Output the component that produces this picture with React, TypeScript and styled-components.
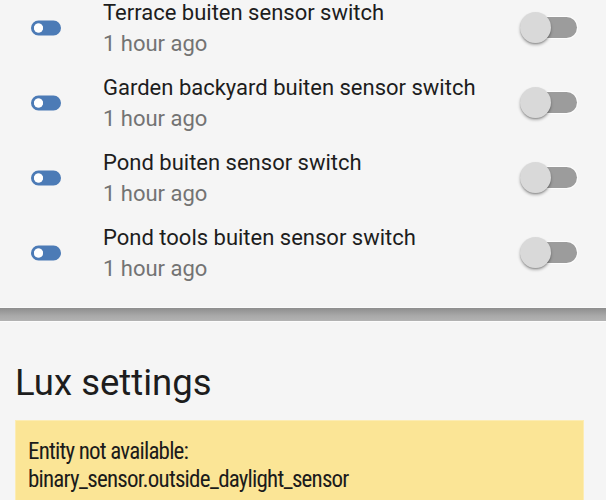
import React from 'react'
import styled, { createGlobalStyle } from 'styled-components'

const GlobalStyle = createGlobalStyle`
  html, body {
    margin: 0;
    padding: 0;
    background: #f5f5f5;
    font-family: Roboto, "Noto Sans", "Liberation Sans", sans-serif;
    -webkit-font-smoothing: antialiased;
  }
`

const Page = styled.div`
  width: 606px;
  height: 500px;
  overflow: hidden;
`

// the list is scrolled a little, so its first row starts above the window
const Scroller = styled.div`
  margin-top: -10px;
`

const Card = styled.section`
  background: #f5f5f5;
`

const EntityList = styled(Card)`
  padding-bottom: 17px;
  border-bottom: 1px solid #fafafa;
`

const Row = styled.div`
  display: flex;
  align-items: center;
  height: 75px;
  padding: 0 29px 0 28px;
`

const IconBox = styled.div`
  flex: 0 0 36px;
  width: 36px;
  height: 36px;
  display: flex;
  align-items: center;
  justify-content: center;
  margin-right: 39px;
`

const Info = styled.div`
  flex: 1 1 0;
  display: flex;
  flex-direction: column;
`

const Name = styled.div`
  font-size: 22px;
  line-height: 31px;
  color: #1d1d1d;
`

const Secondary = styled.div`
  font-size: 22px;
  line-height: 31px;
  color: #737373;
`

const Switch = styled.div`
  position: relative;
  flex: 0 0 54px;
  width: 54px;
  height: 21px;
  border-radius: 11px;
  background: #9c9c9c;
  box-shadow: 0 0 0 1px rgba(255, 255, 255, 0.8);
`

const Thumb = styled.div`
  position: absolute;
  left: -3px;
  top: -5px;
  width: 31px;
  height: 31px;
  border-radius: 50%;
  background: #d9d9d9;
  box-shadow: 0 2px 3px rgba(0, 0, 0, 0.3), 0 1px 1px rgba(0, 0, 0, 0.15);
`

const Divider = styled.div`
  height: 13px;
  background: linear-gradient(#8e8e8e, #a9a9a9 60%, #b3b3b3);
  border-bottom: 1px solid #fcfcfc;
`

const LuxCard = styled(Card)`
  padding: 37px 22px 0 15px;
`

const Heading = styled.h1`
  margin: 0 0 13px 0;
  font-size: 36.5px;
  font-weight: 400;
  line-height: 48px;
  color: #1d1d1d;
`

const Warning = styled.div`
  background: #fbe596;
  border: 1px solid #fcecb4;
  padding: 17px 12px 20px;
  font-family: "Roboto Condensed", Roboto, sans-serif;
  font-stretch: condensed;
  font-size: 23px;
  letter-spacing: -0.8px;
  line-height: 28px;
  color: #1b1b1b;
`

function ToggleIcon() {
  return (
    <svg width="36" height="36" viewBox="0 0 24 24">
      <path
        fill="#4c7bb6"
        d="M17,7H7A5,5 0 0,0 2,12A5,5 0 0,0 7,17H17A5,5 0 0,0 22,12A5,5 0 0,0 17,7M7,15A3,3 0 0,1 4,12A3,3 0 0,1 7,9A3,3 0 0,1 10,12A3,3 0 0,1 7,15Z"
      />
      <circle cx="7" cy="12" r="3" fill="#ffffff" />
    </svg>
  )
}

const entities = [
  'Terrace buiten sensor switch',
  'Garden backyard buiten sensor switch',
  'Pond buiten sensor switch',
  'Pond tools buiten sensor switch',
]

export default function App() {
  return (
    <Page>
      <GlobalStyle />
      <Scroller>
        <EntityList>
          {entities.map((name) => (
            <Row key={name}>
              <IconBox>
                <ToggleIcon />
              </IconBox>
              <Info>
                <Name>{name}</Name>
                <Secondary>1 hour ago</Secondary>
              </Info>
              <Switch>
                <Thumb />
              </Switch>
            </Row>
          ))}
        </EntityList>
        <Divider />
        <LuxCard>
          <Heading>Lux settings</Heading>
          <Warning>
            Entity not available:
            <br />
            binary_sensor.outside_daylight_sensor
          </Warning>
        </LuxCard>
      </Scroller>
    </Page>
  )
}
